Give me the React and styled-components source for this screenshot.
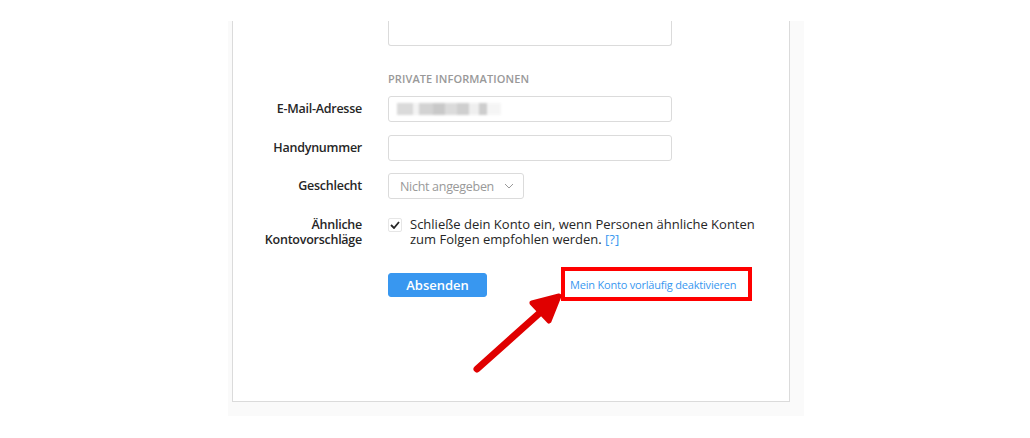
import React from 'react';
import styled, { createGlobalStyle } from 'styled-components';

const GlobalStyle = createGlobalStyle`
	html, body {
		margin: 0;
		padding: 0;
		background: #fff;
		font-family: 'Open Sans', 'Noto Sans', sans-serif;
		color: #262626;
	}
`;

function App() {
	return (
		<>
			<GlobalStyle />
			<Page>
				<Backdrop>
					<Panel>
						<Row>
							<Label />
							<TextAreaTail />
						</Row>
						<Row top={26}>
							<Label />
							<SectionTitle>Private Informationen</SectionTitle>
						</Row>
						<Row top={10}>
							<Label>E-Mail-Adresse</Label>
							<Input>
								<Blurred />
							</Input>
						</Row>
						<Row top={13}>
							<Label>Handynummer</Label>
							<Input />
						</Row>
						<Row top={12}>
							<Label>Geschlecht</Label>
							<Select>
								<span>Nicht angegeben</span>
								<svg width='10' height='6' viewBox='0 0 10 6'>
									<path d='M1 1l4 4 4-4' fill='none' stroke='#999' strokeWidth='1' />
								</svg>
							</Select>
						</Row>
						<Row top={18} align='flex-start'>
							<Label multi>
								Ähnliche
								<br />
								Kontovorschläge
							</Label>
							<CheckLine>
								<CheckBox>
									<svg width='10' height='8' viewBox='0 0 10 8'>
										<path d='M1 4l3 3 5-6' fill='none' stroke='#262626' strokeWidth='1.8' />
									</svg>
								</CheckBox>
								<CheckText>
									Schließe dein Konto ein, wenn Personen ähnliche Konten zum Folgen empfohlen werden.{' '}
									<HelpLink>[?]</HelpLink>
								</CheckText>
							</CheckLine>
						</Row>
						<Row top={20}>
							<Label />
							<Actions>
								<SubmitButton>Absenden</SubmitButton>
								<Highlight>
									<DeactivateLink>Mein Konto vorläufig deaktivieren</DeactivateLink>
								</Highlight>
							</Actions>
						</Row>
					</Panel>
				</Backdrop>
				<Arrow width='1030' height='438' viewBox='0 0 1030 438'>
					<path d='M477 369L553 301' stroke='#e00000' strokeWidth='7' strokeLinecap='round' fill='none' />
					<path
						d='M559 296L532 303L549 321Z'
						fill='#e00000'
						stroke='#e00000'
						strokeWidth='5'
						strokeLinejoin='round'
					/>
				</Arrow>
			</Page>
		</>
	);
}
export default App;

const Page = styled.div`
	position: relative;
	width: 1030px;
	height: 438px;
	overflow: hidden;
`;

const Backdrop = styled.div`
	margin: 21px 0 0 228px;
	width: 576px;
	background: #fafafa;
	padding: 0 14px 14px 4px;
	box-sizing: border-box;
`;

const Panel = styled.div`
	background: #fff;
	border: 1px solid #dbdbdb;
	border-top: none;
	height: 381px;
	box-sizing: border-box;
	display: flex;
	flex-direction: column;
`;

const Row = styled.div`
	display: flex;
	align-items: ${(p) => p.align || 'center'};
	gap: 26px;
	margin-top: ${(p) => p.top || 0}px;
`;

const Label = styled.label`
	width: 129px;
	flex: none;
	text-align: right;
	font-size: 12.5px;
	font-weight: 600;
	letter-spacing: -0.25px;
	line-height: ${(p) => (p.multi ? '15px' : '18px')};
	color: #262626;
`;

const TextAreaTail = styled.div`
	width: 284px;
	height: 25px;
	border: 1px solid #dbdbdb;
	border-top: none;
	border-radius: 0 0 3px 3px;
	box-sizing: border-box;
`;

const SectionTitle = styled.div`
	font-size: 11px;
	font-weight: 600;
	text-transform: uppercase;
	color: #999;
	line-height: 14px;
	letter-spacing: 0.1px;
`;

const Input = styled.div`
	width: 284px;
	height: 26px;
	border: 1px solid #dbdbdb;
	border-radius: 3px;
	box-sizing: border-box;
	display: flex;
	align-items: center;
	padding-left: 8px;
`;

const Blurred = styled.div`
	width: 104px;
	height: 12px;
	background: linear-gradient(
		90deg,
		#d6d6d6 0 16px,
		#f2f2f2 16px 22px,
		#cfcfcf 22px 36px,
		#c4c4c4 36px 48px,
		#d8d8d8 48px 60px,
		#cacaca 60px 72px,
		#eeeeee 72px 82px,
		#c8c8c8 82px 90px,
		#f5f5f5 90px
	);
	filter: blur(1px);
	opacity: 0.9;
`;

const Select = styled.div`
	width: 136px;
	height: 26px;
	border: 1px solid #dbdbdb;
	border-radius: 3px;
	box-sizing: border-box;
	display: flex;
	align-items: center;
	justify-content: space-between;
	padding: 0 9px 0 11px;
	font-size: 12.5px;
	letter-spacing: -0.3px;
	color: #999;
`;

const CheckLine = styled.div`
	display: flex;
	align-items: flex-start;
	gap: 8px;
`;

const CheckBox = styled.div`
	width: 12px;
	height: 12px;
	margin-top: 1px;
	border: 1px solid #e6e6e6;
	border-radius: 2px;
	display: flex;
	align-items: center;
	justify-content: center;
	flex: none;
`;

const CheckText = styled.p`
	margin: 0;
	width: 350px;
	font-size: 13px;
	line-height: 15px;
	color: #262626;
`;

const HelpLink = styled.a`
	color: #3897f0;
	text-decoration: none;
`;

const Actions = styled.div`
	display: flex;
	align-items: center;
	gap: 74px;
`;

const SubmitButton = styled.button`
	width: 99px;
	height: 24px;
	border: 1px solid #3897f0;
	border-radius: 3px;
	background: #3897f0;
	color: #fff;
	font-family: inherit;
	font-size: 13px;
	font-weight: 600;
	padding: 0;
	margin-top: 2px;
`;

const Highlight = styled.div`
	border: 4px solid #ff0000;
	height: 34px;
	width: 191px;
	box-sizing: border-box;
	display: flex;
	align-items: center;
	padding-left: 5px;
`;

const DeactivateLink = styled.a`
	color: #3897f0;
	font-size: 11px;
	letter-spacing: -0.2px;
	text-decoration: none;
	white-space: nowrap;
`;

const Arrow = styled.svg`
	position: absolute;
	left: 0;
	top: 0;
	pointer-events: none;
`;
